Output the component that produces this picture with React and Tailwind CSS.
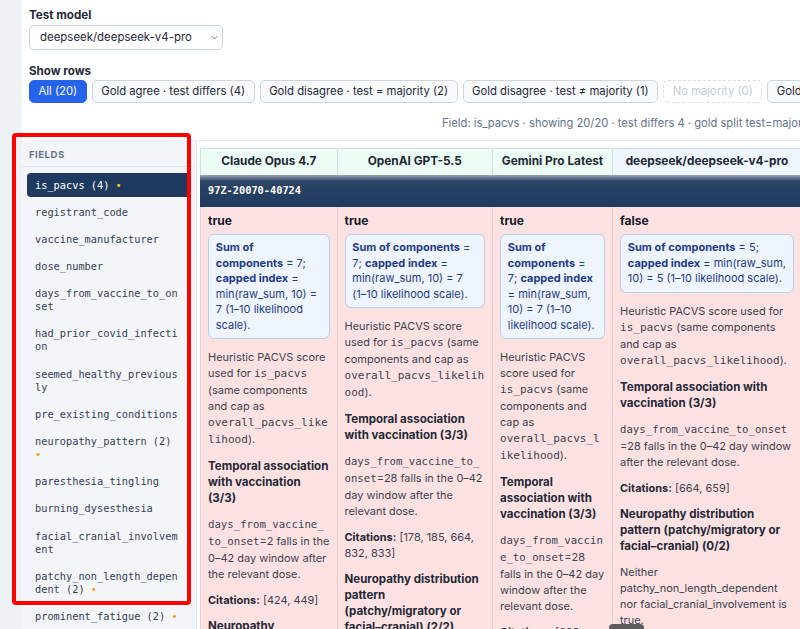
import React from 'react'
import { ChevronDown } from 'lucide-react'

const SANS = "font-['Inter','Liberation_Sans',Arial,sans-serif]"
const MONO = "font-['DejaVu_Sans_Mono','Liberation_Mono',monospace]"

const FIELDS = [
  { name: 'is_pacvs', count: 4, active: true },
  { name: 'registrant_code' },
  { name: 'vaccine_manufacturer' },
  { name: 'dose_number' },
  { name: 'days_from_vaccine_to_onset' },
  { name: 'had_prior_covid_infection' },
  { name: 'seemed_healthy_previously' },
  { name: 'pre_existing_conditions' },
  { name: 'neuropathy_pattern', count: 2 },
  { name: 'paresthesia_tingling' },
  { name: 'burning_dysesthesia' },
  { name: 'facial_cranial_involvement' },
  { name: 'patchy_non_length_dependent', count: 2 },
  { name: 'prominent_fatigue', count: 2 },
  { name: 'fatigue_onset_weeks' },
]

const FILTERS = [
  { label: 'All (20)', active: true },
  { label: 'Gold agree · test differs (4)' },
  { label: 'Gold disagree · test = majority (2)' },
  { label: 'Gold disagree · test ≠ majority (1)' },
  { label: 'No majority (0)', disabled: true },
  { label: 'Gold agree · test agrees (16)' },
]

const MODELS = [
  { name: 'Claude Opus 4.7', head: 'bg-[#ecfdf5]', value: 'true', sum: 7, onset: 2, cites: '[424, 449]', neuro: '2/2' },
  { name: 'OpenAI GPT-5.5', head: 'bg-[#ecfdf5]', value: 'true', sum: 7, onset: 28, cites: '[178, 185, 664, 832, 833]', neuro: '2/2' },
  { name: 'Gemini Pro Latest', head: 'bg-[#ecfdf5]', value: 'true', sum: 7, onset: 28, cites: '[663, 664]', neuro: '2/2' },
  { name: 'deepseek/deepseek-v4-pro', head: 'bg-[#eff6ff]', value: 'false', sum: 5, onset: 28, cites: '[664, 659]', neuro: '0/2' },
]

function Code({ children, small }) {
  return (
    <code className={`${MONO} ${small ? 'text-[10.68px]' : 'text-[11.05px]'}`}>{children}</code>
  )
}

function ModelCell({ m }) {
  return (
    <div className="flex flex-col border-l border-[#e7cfcf] bg-[#fee2e2] px-[7px] pt-[6px] text-[10.96px] leading-[16px] text-[#3b4250] [overflow-wrap:anywhere]">
      <div className="mb-[5px] text-[12px] font-bold text-[#111827]">{m.value}</div>
      <div className="rounded-[6px] border border-[#b3cff3] bg-[#eef5ff] px-[6.8px] py-[5px] text-[11px] leading-[15.5px] text-[#1e3a8a]">
        <b>Sum of components</b> = {m.sum}; <b>capped index</b> = min(raw_sum, 10) = {m.sum} (
        <span className="whitespace-nowrap">1–10</span> likelihood scale).
      </div>
      <div className="mt-[10px] flex flex-col gap-[10px]">
        <p>
          Heuristic PACVS score used for <Code>is_pacvs</Code> (same components and cap as{' '}
          <Code>overall_pacvs_likelihood</Code>).
        </p>
        <h4 className="text-[11.53px] font-bold text-[#1f2937]">Temporal association with vaccination (3/3)</h4>
        <p>
          <Code small>days_from_vaccine_to_onset</Code>={m.onset} falls in the{' '}
          <span className="whitespace-nowrap">0–42</span> day window after the relevant dose.
        </p>
        <p>
          <b className="text-[#1f2937]">Citations:</b> {m.cites}
        </p>
        <h4 className="text-[11.53px] font-bold text-[#1f2937]">
          Neuropathy distribution pattern (patchy/migratory or{' '}
          <span className="whitespace-nowrap">facial–cranial)</span> ({m.neuro})
        </h4>
        {m.neuro === '0/2' ? (
          <p>Neither patchy_non_length_dependent nor facial_cranial_involvement is true.</p>
        ) : (
          <p>
            <Code small>patchy_non_length_dependent</Code> and <Code small>facial_cranial_involvement</Code> are both true.
          </p>
        )}
      </div>
    </div>
  )
}

export default function App() {
  return (
    <div className={`relative h-[629px] w-[800px] overflow-hidden bg-[#eef1f5] ${SANS} text-[#1f2937]`}>
      <div className="ml-[22px] flex w-[1200px] flex-col">
        {/* Controls */}
        <div className="h-[140px] bg-white pl-[7px] pt-[8px]">
          <div className="text-[11.6px] font-bold leading-[15px]">Test model</div>
          <div className="mt-[2px] flex h-[25px] w-[194px] items-center justify-between rounded-[5px] border border-[#cbd5e1] bg-white pl-[10px] pr-[2px] text-[11.44px]">
            <span>deepseek/deepseek-v4-pro</span>
            <ChevronDown size={11} strokeWidth={1.6} className="text-[#4b5563]" />
          </div>
          <div className="mt-[14px] text-[11.6px] font-bold leading-[15px]">Show rows</div>
          <div className="mt-[1px] flex gap-[5px]">
            {FILTERS.map((f) => (
              <span
                key={f.label}
                className={
                  f.active
                    ? 'flex h-[23px] items-center whitespace-nowrap rounded-[5px] border border-[#2563eb] bg-[#2563eb] px-[8.5px] text-[11.3px] text-white'
                    : f.disabled
                      ? 'flex h-[23px] items-center whitespace-nowrap rounded-[5px] border border-dashed border-[#d9dee6] bg-white px-[8.5px] text-[11.3px] text-[#c4cbd6]'
                      : 'flex h-[23px] items-center whitespace-nowrap rounded-[5px] border border-[#cdd5e0] bg-[#f8fafc] px-[8.5px] text-[11.3px] text-[#1f2937]'
                }
              >
                {f.label}
              </span>
            ))}
          </div>
          <div className="mt-[12px] whitespace-nowrap pl-[413px] text-[11.2px] leading-[16px] text-[#64748b]">
            Field: is_pacvs · showing 20/20 · test differs 4 · gold split test=majority 2 · test≠majority 1
          </div>
        </div>

        <div className="flex">
          {/* Field list */}
          <aside className="w-[174px] shrink-0 bg-[#f3f5f9]">
            <div className="border-b border-[#e2e8f0] pb-[6px] pl-[7px] pt-[10px] text-[9.6px] font-bold uppercase leading-[10px] tracking-[0.05em] text-[#64748b]">
              Fields
            </div>
            <div className="flex flex-col gap-[3.2px] px-[5px] pt-[6px]">
              {FIELDS.map((f) => (
                <div
                  key={f.name}
                  className={`${MONO} rounded-[4px] px-[8px] py-[5.5px] text-[10.3px] leading-[13px] [overflow-wrap:anywhere] ${
                    f.active ? 'bg-[#1e3a5f] text-white' : 'text-[#334155]'
                  }`}
                >
                  {f.name}
                  {f.count ? ` (${f.count}) ` : ''}
                  {f.count ? (
                    <span className={f.active ? 'text-[#fbbf24]' : 'text-[#f59e0b]'}>•</span>
                  ) : null}
                </div>
              ))}
            </div>
          </aside>

          {/* Comparison table */}
          <main className="flex-1 border-l border-t border-[#e2e8f0] bg-white pl-[3px] pt-[7px]">
            <div className="grid w-[601px] grid-cols-[136.5px_155.5px_120px_189px]">
              {MODELS.map((m) => (
                <div
                  key={m.name}
                  className={`flex h-[27px] items-center justify-center whitespace-nowrap border-l border-t border-[#d3dbe3] text-[11.85px] font-bold text-[#1f2937] ${m.head}`}
                >
                  {m.name}
                </div>
              ))}
              <div
                className={`col-span-4 flex h-[32px] items-center bg-[linear-gradient(180deg,#9ba5b2_0px,#2c4566_6px,#1f3a5f_100%)] pl-[8px] ${MONO} text-[10.3px] font-bold text-white`}
              >
                97Z-20070-40724
              </div>
              {MODELS.map((m) => (
                <ModelCell key={m.name} m={m} />
              ))}
            </div>
          </main>
        </div>
      </div>

      {/* highlight frame around the field list */}
      <div className="pointer-events-none absolute left-[12px] top-[133px] h-[472px] w-[179px] rounded-[4px] border-[4px] border-[#ff0000]" />
      {/* overlay scrollbar thumb */}
      <div className="absolute left-[609px] top-[624px] h-[8px] w-[35px] rounded-full bg-[#5c5c5c]" />
    </div>
  )
}
